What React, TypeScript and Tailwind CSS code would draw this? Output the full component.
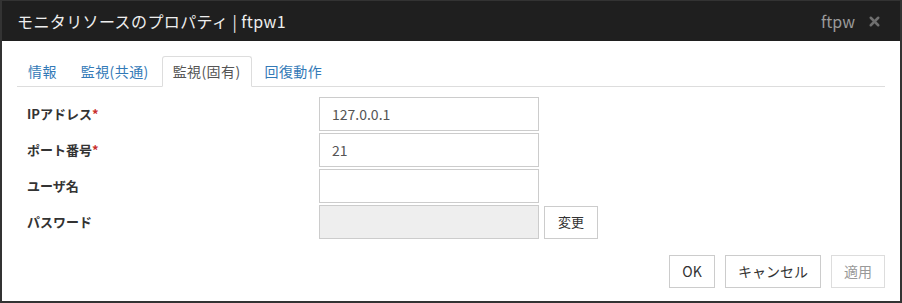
import { X } from "lucide-react"

const font = { fontFamily: '"Noto Sans CJK JP", "Noto Sans", sans-serif' }

interface Field {
  label: string
  required?: boolean
  value?: string
  disabled?: boolean
  action?: string
}

const fields: Field[] = [
  { label: "IPアドレス", required: true, value: "127.0.0.1" },
  { label: "ポート番号", required: true, value: "21" },
  { label: "ユーザ名", value: "" },
  { label: "パスワード", disabled: true, action: "変更" },
]

const tabs = ["情報", "監視(共通)", "監視(固有)", "回復動作"]

export default function App() {
  return (
    <div className="w-[902px] h-[303px] bg-white border-x-2 border-b-2 border-t border-[#333] flex flex-col" style={font}>
      <div className="h-[40px] bg-[#1f1f1f] flex items-center justify-between pl-[15px] pr-[18px]">
        <span className="text-[16px] text-[#eeeeee] leading-none tracking-[0.4px]">モニタリソースのプロパティ | ftpw1</span>
        <div className="flex items-center gap-[12px]">
          <span className="text-[16px] text-[#9a9a9a] leading-none">ftpw</span>
          <X className="w-[15px] h-[15px] text-[#6f6f6f]" strokeWidth={4} />
        </div>
      </div>

      <div className="flex-1 px-[15px] pt-[15px] flex flex-col">
        <div className="flex gap-[2px] border-b border-[#dddddd] h-[31px]">
          {tabs.map((t, i) => (
            <div
              key={t}
              className={
                i === 2
                  ? "px-[10px] h-[31px] flex items-center text-[14px] tracking-[0.4px] text-[#555] border border-[#dddddd] border-b-white bg-white rounded-t-[3px]"
                  : "px-[10px] h-[31px] flex items-center text-[14px] tracking-[0.4px] text-[#337ab7] border border-transparent"
              }
            >
              {t}
            </div>
          ))}
        </div>

        <div className="flex flex-col gap-[2px] mt-[10px] pl-[10px]">
          {fields.map((f) => (
            <div key={f.label} className="flex items-center h-[34px]">
              <div className="w-[292px] text-[13px] font-bold text-[#333]">
                {f.label}
                {f.required && <span className="text-[#c9302c]">*</span>}
              </div>
              <div
                className={
                  f.disabled
                    ? "w-[220px] h-[34px] border border-[#cccccc] bg-[#eeeeee]"
                    : "w-[220px] h-[34px] border border-[#cccccc] bg-white px-[12px] flex items-center text-[14px] text-[#555]"
                }
              >
                {f.value}
              </div>
              {f.action && (
                <button className="ml-[5px] w-[54px] h-[33px] border border-[#cccccc] bg-white text-[13px] text-[#333]">
                  {f.action}
                </button>
              )}
            </div>
          ))}
        </div>

        <div className="flex justify-end gap-[10px] mt-[16px]">
          <button className="w-[46px] h-[33px] border border-[#cccccc] bg-white text-[14px] text-[#333]">OK</button>
          <button className="w-[96px] h-[33px] border border-[#cccccc] bg-white text-[14px] text-[#333]">キャンセル</button>
          <button className="w-[54px] h-[33px] border border-[#dddddd] bg-white text-[14px] text-[#999]">適用</button>
        </div>
      </div>
    </div>
  )
}
